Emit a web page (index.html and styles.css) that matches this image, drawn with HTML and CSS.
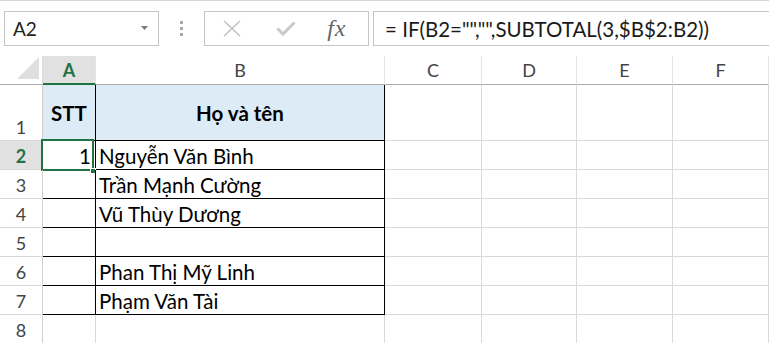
FILE: index.html
```html
<!DOCTYPE html>
<html lang="vi">
<head>
    <meta charset="UTF-8">
    <meta name="viewport" content="width=device-width, initial-scale=1.0">
    <title>Sheet1</title>
    <link rel="stylesheet" href="styles.css">
</head>
<body>
    <!-- formula bar -->
    <div class="formula-bar">
        <div class="name-box">
            <span>A2</span>
            <svg class="drop" width="7" height="4" viewBox="0 0 7 4"><path d="M0 0 L7 0 L3.5 4 Z" fill="#7a7a7a"/></svg>
        </div>
        <div class="grip"><i></i><i></i><i></i></div>
        <div class="fx-buttons">
            <span class="fx-btn">
                <svg width="20" height="17" viewBox="0 0 20 17"><path d="M2 1 L18 16 M18 1 L2 16" stroke="#c3c3c3" stroke-width="1.6" fill="none"/></svg>
            </span>
            <span class="fx-btn">
                <svg width="20" height="15" viewBox="0 0 20 15"><path d="M1.5 7.5 L7 13 L18.5 1.5" stroke="#c8c8c8" stroke-width="3" fill="none"/></svg>
            </span>
            <span class="fx-btn fx-label">fx</span>
        </div>
        <div class="formula-input">= IF(B2="","",SUBTOTAL(3,$B$2:B2))</div>
    </div>

    <!-- sheet -->
    <div class="sheet">
        <div class="cell corner">
            <svg width="22" height="22" viewBox="0 0 22 22"><path d="M22 0 L22 22 L0 22 Z" fill="#dfdfdf"/></svg>
        </div>
        <div class="cell col-head selected">A</div>
        <div class="cell col-head">B</div>
        <div class="cell col-head">C</div>
        <div class="cell col-head">D</div>
        <div class="cell col-head">E</div>
        <div class="cell col-head">F</div>

        <div class="cell row-head">1</div>
        <div class="cell tb title">STT</div>
        <div class="cell tb title">Họ và tên</div>
        <div class="cell"></div>
        <div class="cell"></div>
        <div class="cell"></div>
        <div class="cell"></div>

        <div class="cell row-head selected">2</div>
        <div class="cell tb num active">1<span class="sel-box"><i class="handle"></i></span></div>
        <div class="cell tb">Nguyễn Văn Bình</div>
        <div class="cell"></div>
        <div class="cell"></div>
        <div class="cell"></div>
        <div class="cell"></div>

        <div class="cell row-head">3</div>
        <div class="cell tb"></div>
        <div class="cell tb">Trần Mạnh Cường</div>
        <div class="cell"></div>
        <div class="cell"></div>
        <div class="cell"></div>
        <div class="cell"></div>

        <div class="cell row-head">4</div>
        <div class="cell tb"></div>
        <div class="cell tb">Vũ Thùy Dương</div>
        <div class="cell"></div>
        <div class="cell"></div>
        <div class="cell"></div>
        <div class="cell"></div>

        <div class="cell row-head">5</div>
        <div class="cell tb"></div>
        <div class="cell tb"></div>
        <div class="cell"></div>
        <div class="cell"></div>
        <div class="cell"></div>
        <div class="cell"></div>

        <div class="cell row-head">6</div>
        <div class="cell tb"></div>
        <div class="cell tb">Phan Thị Mỹ Linh</div>
        <div class="cell"></div>
        <div class="cell"></div>
        <div class="cell"></div>
        <div class="cell"></div>

        <div class="cell row-head">7</div>
        <div class="cell tb"></div>
        <div class="cell tb">Phạm Văn Tài</div>
        <div class="cell"></div>
        <div class="cell"></div>
        <div class="cell"></div>
        <div class="cell"></div>

        <div class="cell row-head">8</div>
        <div class="cell"></div>
        <div class="cell"></div>
        <div class="cell"></div>
        <div class="cell"></div>
        <div class="cell"></div>
        <div class="cell"></div>
    </div>
</body>
</html>
```

FILE: styles.css
```css
* {
    box-sizing: border-box;
}

body {
    margin: 0;
    padding: 0;
    background-color: #fff;
    font-family: Lato, "Open Sans", sans-serif;
    color: #000;
    overflow: hidden;
}

/* formula bar */
.formula-bar {
    height: 56px;
    border-top: 1px solid #d5d5d5;
    padding-top: 10px;
    display: flex;
    align-items: flex-start;
}

.name-box {
    width: 155px;
    height: 35px;
    margin-left: 4px;
    border: 1px solid #c6c6c6;
    display: flex;
    align-items: center;
    justify-content: space-between;
    padding: 0 10px 0 8px;
    font-size: 19px;
    color: #222;
}

.name-box .drop {
    margin-top: -2px;
}

.grip {
    width: 4px;
    margin-left: 21px;
    margin-top: 10px;
    display: flex;
    flex-direction: column;
    gap: 3px;
}

.grip i {
    display: block;
    width: 3px;
    height: 3px;
    background-color: #a9a9a9;
}

.fx-buttons {
    width: 165px;
    height: 35px;
    margin-left: 20px;
    border: 1px solid #c6c6c6;
    display: flex;
    align-items: center;
}

.fx-btn {
    width: 55px;
    display: flex;
    justify-content: center;
    align-items: center;
}

.fx-label {
    font-family: "Liberation Serif", "DejaVu Serif", serif;
    font-style: italic;
    font-size: 24px;
    color: #666;
    padding-right: 8px;
    letter-spacing: 1px;
}

.formula-input {
    flex: 1;
    height: 35px;
    margin-left: 4px;
    margin-right: -2px;
    border: 1px solid #c6c6c6;
    padding-left: 11px;
    display: flex;
    align-items: center;
    font-size: 20.5px;
    color: #1a1a1a;
    white-space: nowrap;
}

/* sheet grid */
.sheet {
    display: grid;
    grid-template-columns: 43px 53px 289px 97px 95px 96px 96px;
    grid-template-rows: 29px 56px repeat(7, 29px);
}

.cell {
    border-right: 1px solid #d9d9d9;
    border-bottom: 1px solid #d9d9d9;
    display: flex;
    align-items: flex-end;
    padding: 0 3px 1px;
    font-size: 20.5px;
    white-space: nowrap;
    position: relative;
}

.corner {
    border-bottom-color: #ababab;
    border-right-color: #dcdcdc;
    justify-content: flex-end;
    padding: 0 3px 5px 0;
}

.col-head {
    justify-content: center;
    align-items: center;
    border-bottom-color: #ababab;
    border-right-color: #e4e4e4;
    color: #444;
    font-size: 18px;
    padding: 0;
}

.row-head {
    justify-content: center;
    border-right-color: #d0d0d0;
    color: #444;
    font-size: 18px;
    padding: 0 0 2px;
}

.selected {
    background-color: #e1e1e1;
    color: #217346;
    font-weight: bold;
}

.col-head.selected {
    border-bottom: 2px solid #217346;
}

.tb {
    border-right-color: #000;
    border-bottom-color: #000;
}

.title {
    background-color: #ddebf7;
    font-weight: bold;
    justify-content: center;
    align-items: center;
    padding: 0;
}

.num {
    justify-content: flex-end;
    padding-right: 4px;
}

/* active cell outline */
.sel-box {
    position: absolute;
    left: -2px;
    top: -2px;
    width: 53px;
    height: 32px;
    border: 2px solid #217346;
}

.handle {
    position: absolute;
    right: -4px;
    bottom: -5px;
    width: 6px;
    height: 6px;
    background-color: #217346;
    border: 1px solid #fff;
}
```
